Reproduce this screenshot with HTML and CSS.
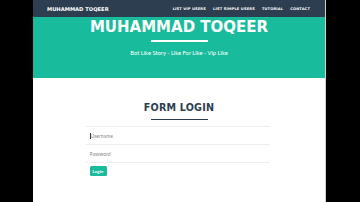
FILE: index.html
```html
<!DOCTYPE html>
<html>
<head>
<meta charset="utf-8">
<link rel="stylesheet" href="styles.css">
</head>
<body>
<div class="screen">
  <nav class="nav">
    <span class="brand">MUHAMMAD TOQEER</span>
    <ul class="links">
      <li>LIST VIP USERS</li>
      <li>LIST SIMPLE USERS</li>
      <li>TUTORIAL</li>
      <li>CONTACT</li>
    </ul>
  </nav>
  <header class="hero">
    <h1 class="hero-title">MUHAMMAD TOQEER</h1>
    <div class="hero-line"></div>
    <p class="hero-sub">Bot Like Story - Like For Like - Vip Like</p>
  </header>
  <section class="login">
    <h2 class="login-title">FORM LOGIN</h2>
    <div class="login-line"></div>
    <form class="form">
      <div class="field"><span class="caret"></span>Username</div>
      <div class="field">Password</div>
      <div class="actions"><span class="btn">Login</span></div>
    </form>
  </section>
</div>
</body>
</html>
```
FILE: styles.css
```css
html, body {
  margin: 0;
  padding: 0;
  background: #000;
  height: 202px;
  overflow: hidden;
}
.screen {
  margin-left: 33px;
  width: 292px;
  height: 202px;
  background: #fff;
  border-right: 1px solid #cfcfcf;
  font-family: "DejaVu Sans", sans-serif;
}
.nav {
  height: 17px;
  background: #2c3e50;
  display: flex;
  align-items: center;
  justify-content: space-between;
  padding: 0 15px 0 14px;
  color: #fff;
}
.brand {
  font-weight: bold;
  font-size: 5.2px;
}
.links {
  display: flex;
  gap: 7px;
  margin: 0;
  padding: 0;
  list-style: none;
  font-weight: bold;
  font-size: 3.6px;
  letter-spacing: 0.15px;
}
.hero {
  height: 61px;
  background: #18bc9c;
  color: #fff;
  display: flex;
  flex-direction: column;
  align-items: center;
  padding-top: 1px;
  box-sizing: border-box;
}
.hero-title {
  margin: 0;
  font-size: 15px;
  line-height: 18px;
  font-weight: bold;
}
.hero-line {
  width: 57px;
  height: 1.5px;
  background: #fff;
  margin-top: 4px;
}
.hero-sub {
  margin: 7px 0 0;
  font-family: Lato, sans-serif;
  font-size: 5.8px;
  line-height: 8px;
}
.login {
  display: flex;
  flex-direction: column;
  align-items: center;
  padding-top: 24px;
}
.login-title {
  margin: 0;
  font-size: 9.6px;
  line-height: 11px;
  font-weight: bold;
  color: #2c3e50;
  letter-spacing: 0.2px;
}
.login-line {
  width: 57px;
  height: 1.2px;
  background: #2c3e50;
  margin-top: 6px;
}
.form {
  width: 184px;
  margin-top: 6px;
  margin-left: -3px;
  border-top: 1px solid #eee;
  font-family: Lato, sans-serif;
}
.field {
  height: 17px;
  border-bottom: 1px solid #eee;
  display: flex;
  align-items: center;
  padding-left: 4px;
  font-size: 5px;
  color: #8a8a8a;
}
.caret {
  width: 0.6px;
  height: 6px;
  background: #333;
  margin-right: 0.5px;
}
.actions {
  display: flex;
  padding: 3px 0 0 4px;
}
.btn {
  display: flex;
  align-items: center;
  justify-content: center;
  width: 17px;
  height: 10px;
  background: #18bc9c;
  border-radius: 1.5px;
  color: #fff;
  font-size: 4.5px;
  font-weight: bold;
}
```
